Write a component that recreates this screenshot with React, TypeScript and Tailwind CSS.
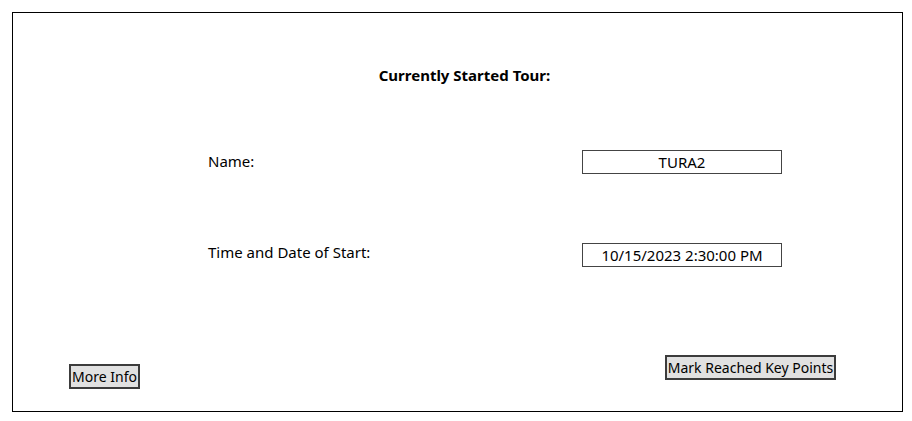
export default function App() {
  const font = { fontFamily: '"Noto Sans", "Open Sans", sans-serif' };
  return (
    <div className="w-[912px] h-[421px] bg-white pt-[12px] pl-[12px]" style={font}>
      <div className="w-[891px] h-[400px] border border-black flex flex-col text-[15px] text-black">
        <div className="pt-[52px] pl-[14px] flex justify-center">
          <span className="font-bold leading-[20px]">Currently Started Tour:</span>
        </div>
        <div className="mt-[65px] flex items-center">
          <div className="w-[569px] pl-[195px] leading-[20px] -mt-[2px]">Name:</div>
          <div className="w-[200px] h-[24px] border border-[#444] flex items-center justify-center leading-[20px]">TURA2</div>
        </div>
        <div className="mt-[69px] flex items-center">
          <div className="w-[569px] pl-[195px] leading-[20px] -mt-[6px]">Time and Date of Start:</div>
          <div className="w-[200px] h-[24px] border border-[#444] flex items-center justify-center leading-[20px]">10/15/2023 2:30:00 PM</div>
        </div>
        <div className="mt-[88px] flex justify-between items-start pl-[56px] pr-[66px]">
          <button className="mt-[9px] h-[25px] w-[71px] bg-[#e1e1e1] border-2 border-[#3c3c3c] leading-[20px] text-[14px] flex items-center justify-center whitespace-nowrap">More Info</button>
          <button className="h-[25px] w-[171px] bg-[#e1e1e1] border-2 border-[#3c3c3c] leading-[20px] text-[14px] flex items-center justify-center whitespace-nowrap">Mark Reached Key Points</button>
        </div>
      </div>
    </div>
  );
}
